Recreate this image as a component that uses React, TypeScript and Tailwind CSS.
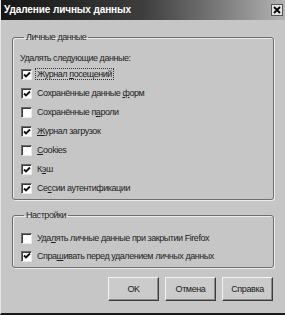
import React from "react";

const FONT = { fontFamily: '"Liberation Sans", Arial, sans-serif' };

/**
 * Classic 3D checkbox with a black tick.
 */
function Check({ checked }: { checked: boolean }) {
  return (
    <span className="w-[11px] h-[11px] shrink-0 bg-white border border-t-[#6a6a6a] border-l-[#6a6a6a] border-r-[#e8e8e8] border-b-[#e8e8e8] shadow-[inset_1px_1px_0_#3a3a3a] flex items-center justify-center">
      {checked && (
        <svg width="8" height="8" viewBox="0 0 8 8">
          <path d="M1 3.5 L3 5.5 L7 1.5" fill="none" stroke="#111" strokeWidth="1.8" />
        </svg>
      )}
    </span>
  );
}

function Row({
  checked,
  children,
  h = "h-[19px]",
}: {
  checked: boolean;
  children: React.ReactNode;
  h?: string;
}) {
  return (
    <div className={`flex items-center gap-[5px] pl-[1px] ${h}`}>
      <Check checked={checked} />
      <span className="leading-none">{children}</span>
    </div>
  );
}

function Btn({ children }: { children: React.ReactNode }) {
  return (
    <button className="w-[51px] h-[24px] bg-[#cbcbcb] border border-t-[#f4f4f4] border-l-[#f4f4f4] border-r-[#3c3c3c] border-b-[#3c3c3c] shadow-[inset_-1px_-1px_0_#8a8a8a] text-[9px] tracking-[-0.4px] text-[#1a1a1a] leading-none">
      {children}
    </button>
  );
}

export default function App() {
  return (
    <div
      className="w-[285px] h-[315px] bg-[#c6c6c6] text-[#1e1e1e] text-[9px] tracking-[-0.45px] flex flex-col border-l border-l-[#e6e6e6] border-b-2 border-b-[#1a1a1a] overflow-hidden"
      style={FONT}
    >
      {/* Title bar */}
      <div className="h-[20px] shrink-0 flex items-center justify-between pl-[3px] pr-[2px] bg-gradient-to-r from-[#161616] via-[#3e3e3e] to-[#b4b4b4]">
        <span className="text-white font-bold text-[10px] tracking-[-0.1px] leading-none">Удаление личных данных</span>
        <span className="w-[12px] h-[12px] bg-[#e4e4e4] border border-[#555] flex items-center justify-center">
          <svg width="8" height="8" viewBox="0 0 8 8">
            <path d="M1 1 L7 7 M7 1 L1 7" stroke="#000" strokeWidth="1.8" />
          </svg>
        </span>
      </div>

      {/* Body */}
      <div className="flex flex-col pt-[10px] pl-[11px] pr-[11px]">
        <fieldset className="border border-[#6e6e6e] rounded-[3px] shadow-[1px_1px_0_#ececec,inset_1px_1px_0_#ececec] pl-[7px] pt-[7px] pb-[1px] min-w-0">
          <legend className="ml-[4px] px-[2px] leading-[14px]">Личные данные</legend>
          <div className="h-[14px] flex items-center leading-none">Удалять следующие данные:</div>
          <Row checked>
            <span className="border border-dotted border-[#333] px-[1px] -ml-[2px]">
              Журнал <span className="underline">п</span>осещений
            </span>
          </Row>
          <Row checked>
            Сохранённые данные <span className="underline">ф</span>орм
          </Row>
          <Row checked={false}>
            Сохранённые п<span className="underline">а</span>роли
          </Row>
          <Row checked>
            <span className="underline">Ж</span>урнал загрузок
          </Row>
          <Row checked={false}>
            <span className="underline">C</span>ookies
          </Row>
          <Row checked>
            К<span className="underline">э</span>ш
          </Row>
          <Row checked>
            Се<span className="underline">с</span>сии аутентификации
          </Row>
        </fieldset>

        <fieldset className="mt-[8px] border border-[#6e6e6e] rounded-[3px] shadow-[1px_1px_0_#ececec,inset_1px_1px_0_#ececec] pl-[7px] pt-[7px] pb-[2px] min-w-0">
          <legend className="ml-[4px] px-[2px] leading-[14px]">Настройки</legend>
          <Row checked={false} h="h-[18px]">
            Уда<span className="underline">л</span>ять личные данные при закрытии Firefox
          </Row>
          <Row checked h="h-[18px]">
            Спра<span className="underline">ш</span>ивать перед удалением личных данных
          </Row>
        </fieldset>

        <div className="mt-[9px] flex justify-end gap-[6px] pr-[1px]">
          <Btn>OK</Btn>
          <Btn>Отмена</Btn>
          <Btn>Справка</Btn>
        </div>
      </div>
    </div>
  );
}
